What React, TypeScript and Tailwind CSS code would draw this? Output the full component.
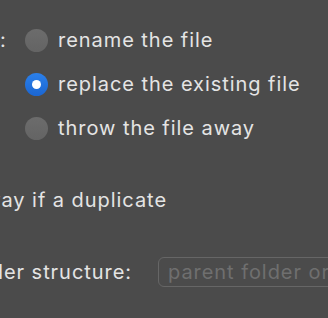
import React from 'react'

const options = [
  { label: 'rename the file', checked: false },
  { label: 'replace the existing file', checked: true },
  { label: 'throw the file away', checked: false },
]

function Radio({ checked }: { checked: boolean }) {
  if (checked) {
    return (
      <div className="w-[23px] h-[23px] rounded-full bg-gradient-to-b from-[#2b80ea] to-[#1b66d2] flex items-center justify-center shrink-0">
        <div className="w-[9px] h-[9px] rounded-full bg-white" />
      </div>
    )
  }
  return <div className="w-[23px] h-[23px] rounded-full bg-gradient-to-b from-[#6c6c6c] to-[#646464] shrink-0" />
}

export default function App() {
  return (
    <div
      className="w-[328px] h-[318px] bg-[#4b4b4b] overflow-hidden text-[#e4e4e4] text-[20px] tracking-[0.95px] pt-[18px]"
      style={{ fontFamily: 'Inter, "Liberation Sans", sans-serif' }}
    >
      <div className="flex flex-col">
        {options.map((o, i) => (
          <div key={o.label} className="h-[44px] flex items-center whitespace-nowrap">
            <div className="w-[25px] shrink-0">{i === 0 ? ':' : ''}</div>
            <Radio checked={o.checked} />
            <span className="ml-[10px]">{o.label}</span>
          </div>
        ))}
      </div>

      <div className="h-[44px] mt-[28px] flex items-center">
        <div className="w-[167px] flex justify-end whitespace-nowrap">
          <span>Move files away if a duplicate</span>
        </div>
      </div>

      <div className="h-[44px] mt-[28px] flex items-center whitespace-nowrap">
        <div className="w-[132px] flex justify-end shrink-0">
          <span>Keep folder structure:</span>
        </div>
        <div className="ml-[26px] h-[30px] w-[220px] shrink-0 rounded-[6px] border-[1.5px] border-[#666666] flex items-center pl-[9px] text-[#6f6f6f]">
          parent folder or subfolder
        </div>
      </div>
    </div>
  )
}
